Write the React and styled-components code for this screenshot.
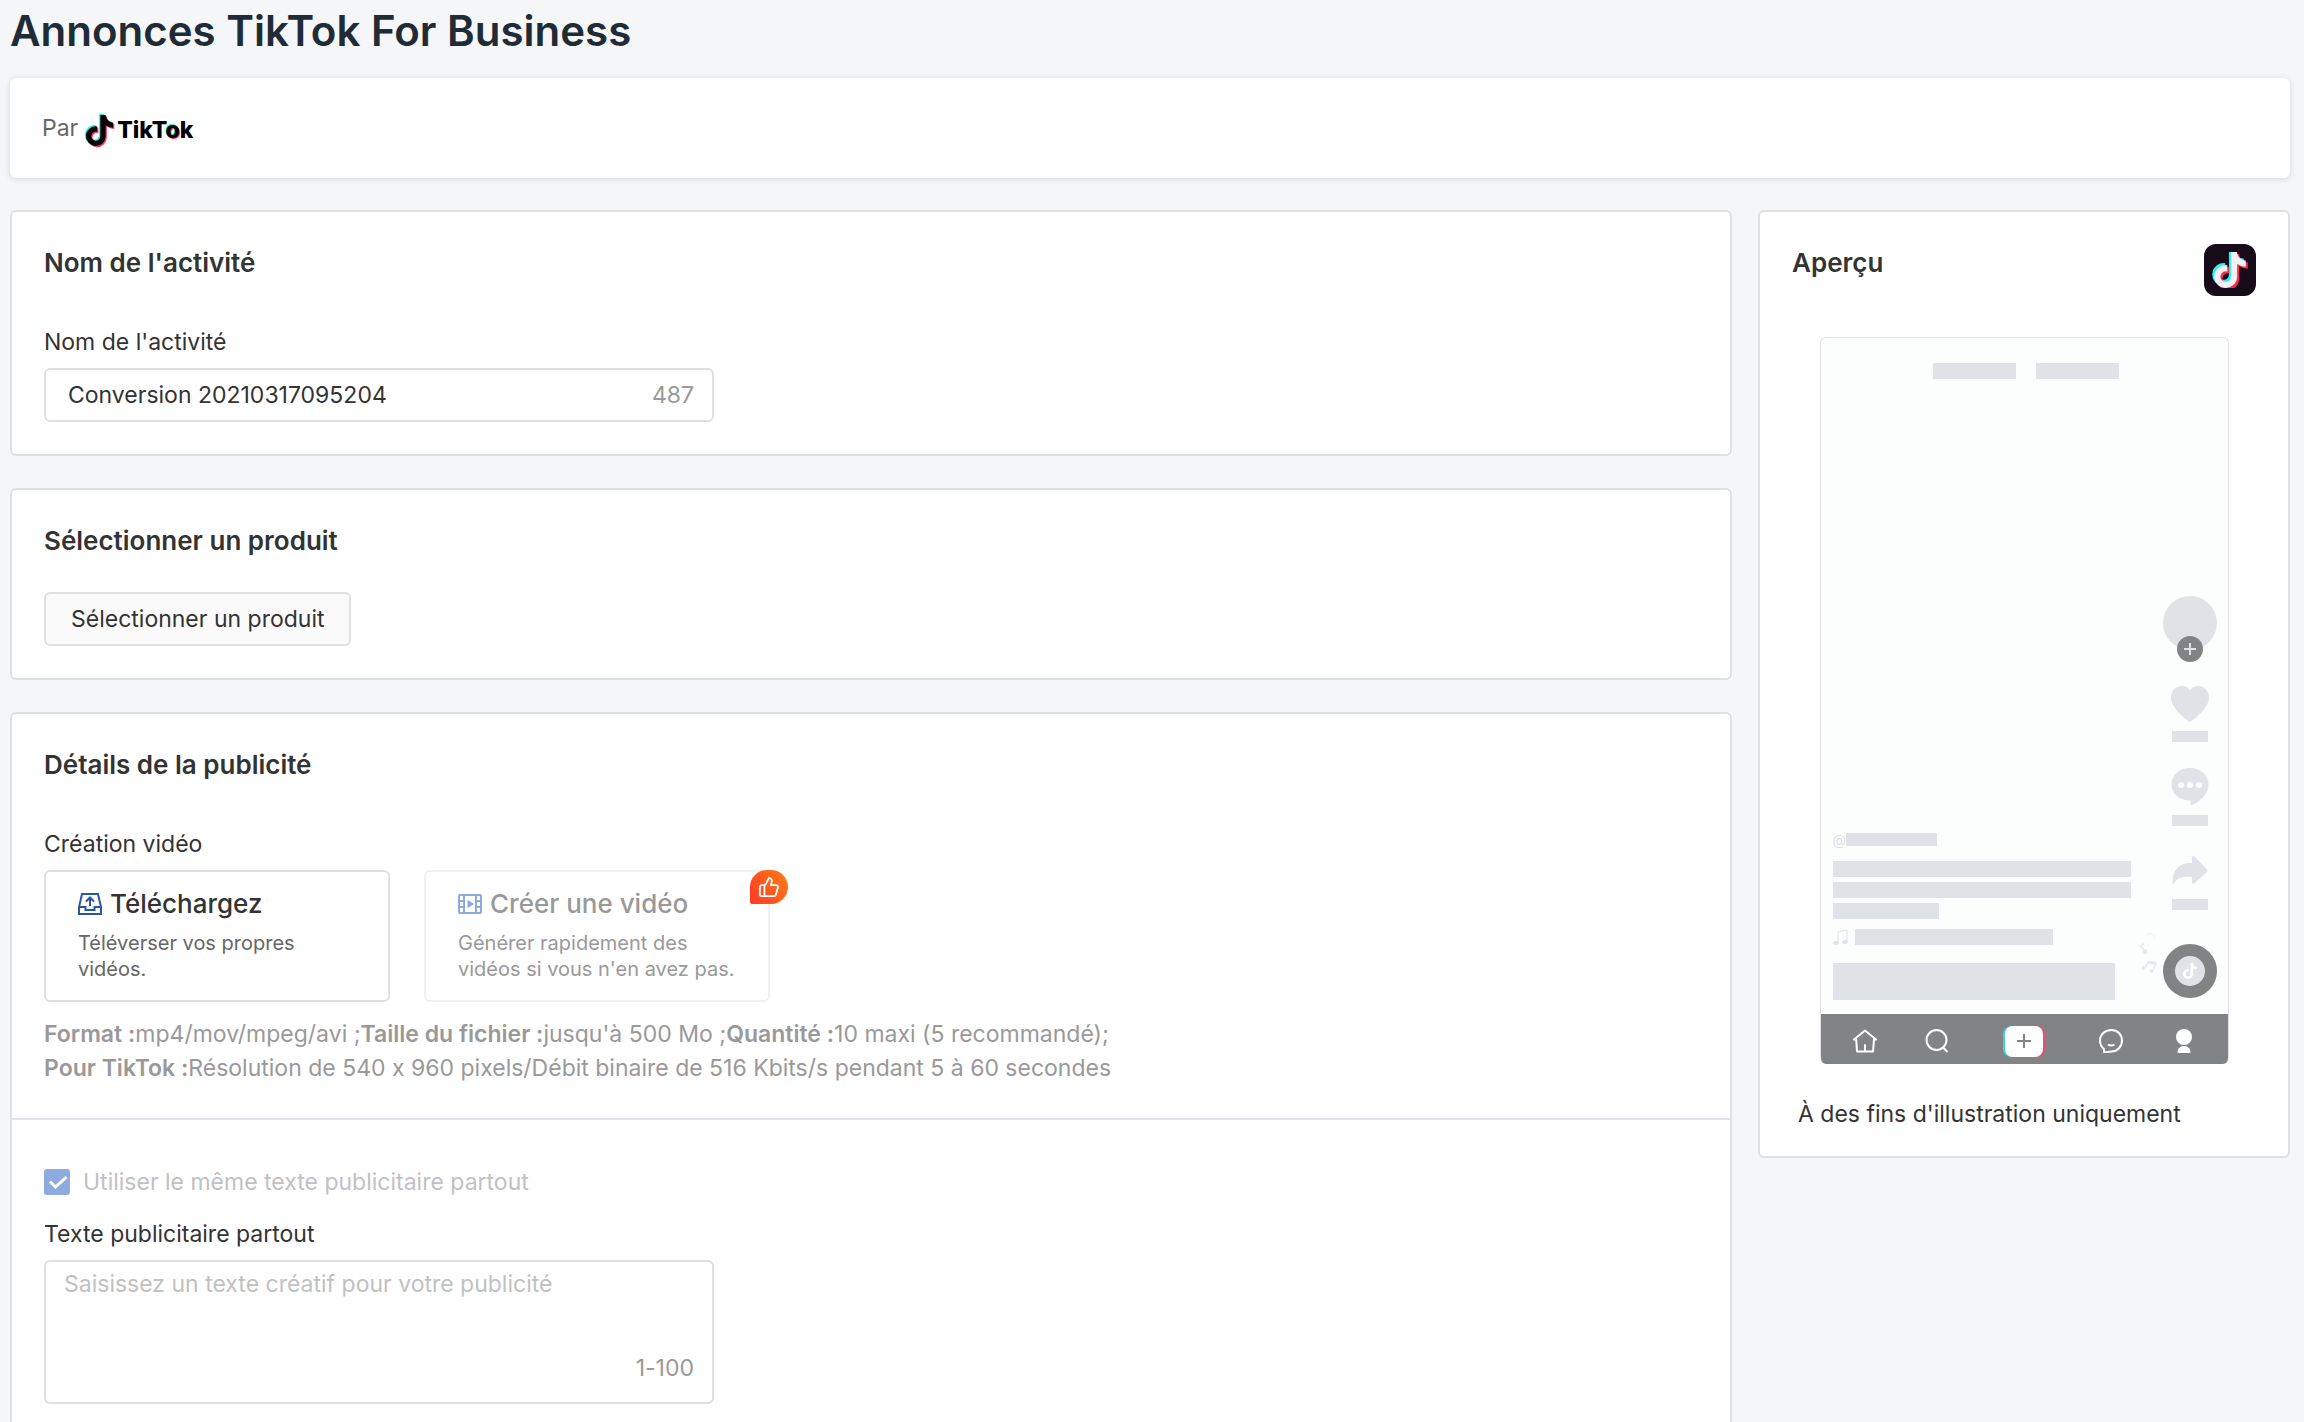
import styled, { createGlobalStyle } from "styled-components";
import { useState } from "react";
import { ThumbsUp } from "lucide-react";
import { FaTiktok } from "react-icons/fa6";

const GlobalStyle = createGlobalStyle`
  * {
    box-sizing: border-box;
  }
  body {
    margin: 0;
    background: #f4f6f8;
    color: #333;
    font-family: Inter, "Liberation Sans", sans-serif;
    font-size: 23px;
    font-feature-settings: "calt" 0;
    line-height: 32px;
  }
  button, input, textarea {
    font: inherit;
    color: inherit;
  }
`;

const TikTokNote = ({ size, color, shift }) => (
  <svg width={size} height={size} viewBox={`0 0 ${size} ${size}`}>
    <FaTiktok x={-shift} y={-shift} size={size} color="#25f4ee" />
    <FaTiktok x={shift} y={shift} size={size} color="#fe2c55" />
    <FaTiktok x={0} y={0} size={size} color={color} />
  </svg>
);

const UploadIcon = () => (
  <svg width="24" height="24" viewBox="0 0 24 24" fill="none" stroke="#2a55a5" strokeWidth="2">
    <path d="M4 2h16l3 13v7H1v-7z" />
    <path d="M1 15h6.500v3h9v-3H23" />
    <path d="M12 14V6M8 9.500L12 5.500l4 4" />
  </svg>
);

const FilmIcon = () => (
  <svg width="24" height="24" viewBox="0 0 24 24" fill="none" stroke="#8faae0" strokeWidth="2">
    <rect x="1" y="3" width="22" height="18" rx="1" />
    <path d="M6 3v18M18 3v18M1 9h5M1 15h5M18 9h5M18 15h5" />
    <path d="M10.500 9.500v5l4-2.500z" fill="#8faae0" />
  </svg>
);

const HeartIcon = () => (
  <svg width="40" height="40" viewBox="0 0 40 40" fill="#dfe2e7">
    <path d="M20 38C18 37 1 25 1 13.500 1 7 5.500 2 11.500 2c3.500 0 6.500 1.500 8.500 4 2-2.500 5-4 8.500-4C34.500 2 39 7 39 13.500 39 25 22 37 20 38z" />
  </svg>
);

const CommentIcon = () => (
  <svg width="40" height="40" viewBox="0 0 40 40">
    <path
      d="M20 0C9.500 0 1.500 7 1.500 16.500S9.500 32.500 20.500 32.500v4c0 .800.700 1 1.500.500C30 33.500 38.500 26 38.500 16.500 38.500 7 30.500 0 20 0z"
      fill="#dfe2e7"
    />
    <circle cx="11" cy="17" r="3" fill="#fff" />
    <circle cx="20" cy="17" r="3" fill="#fff" />
    <circle cx="29" cy="17" r="3" fill="#fff" />
  </svg>
);

const ShareIcon = () => (
  <svg width="40" height="40" viewBox="0 0 40 40" fill="#dfe2e7">
    <path d="M22 5.500c0-1.500 1.200-2 2.200-1.200L37 17.500c.800.800.800 1.400 0 2.200L24.200 31.500c-1 .800-2.200.300-2.200-1.200V25c-8-.500-14 0-17.500 5.800-.800 1-2 .700-2-.600C2.500 18 9 10.500 22 11z" />
  </svg>
);

const MusicIcon = () => (
  <svg width="16" height="16" viewBox="0 0 16 16" fill="none" stroke="#dfe2e7" strokeWidth="1">
    <path d="M5 13V3l9-2v11" />
    <ellipse cx="3" cy="14" rx="2.500" ry="1.500" fill="#dfe2e7" />
    <ellipse cx="12" cy="13" rx="2.500" ry="1.500" fill="#dfe2e7" />
  </svg>
);

const FlyingNotes = () => (
  <svg width="20" height="46" viewBox="0 0 20 46" fill="#e6e8ed" stroke="#e6e8ed">
    <path d="M8 7l2-4 6 2-1 4" fill="none" stroke="#f1f2f5" />
    <path d="M5 20L1.500 16 5 13.500" fill="none" strokeWidth="1.500" />
    <circle cx="6" cy="21.500" r="2" />
    <path d="M6 38l3-6 8 1.500-3 6" fill="none" strokeWidth="1.500" />
    <path d="M9 31l8 1.500v2L9 33z" />
    <circle cx="4.500" cy="38" r="1.500" />
    <circle cx="12.500" cy="41" r="1.500" />
  </svg>
);

const HomeIcon = () => (
  <svg width="24" height="24" viewBox="0 0 24 24" fill="none" stroke="#fff" strokeWidth="2" strokeLinejoin="round" strokeLinecap="round">
    <path d="M1 10.500L12 1.500l11 9h-2L20 22.500H4L3.200 10.500z" />
    <path d="M12 16v6" />
  </svg>
);

const SearchIcon = () => (
  <svg width="24" height="24" viewBox="0 0 24 24" fill="none" stroke="#fff" strokeWidth="2">
    <circle cx="11.500" cy="11" r="10" />
    <path d="M18 18.500l4.500 4.500" />
  </svg>
);

const ChatIcon = () => (
  <svg width="24" height="24" viewBox="0 0 24 24" fill="none" stroke="#fff" strokeWidth="2" strokeLinejoin="round">
    <path d="M12.500 1C6 1 1 5.500 1 11.500c0 3.500 1.500 6.500 4 8.500v3.500l7.500-1c6 0 10.500-5 10.500-11S18.500 1 12.500 1z" />
    <path d="M9 15.500c1.500 1.200 5 1.200 6.500 0" />
  </svg>
);

const UserIcon = () => (
  <svg width="24" height="24" viewBox="0 0 24 24" fill="#fff">
    <circle cx="12" cy="8" r="8" />
    <path d="M5.500 24c0-5 3-7 6.500-7s6.500 2 6.500 7z" />
  </svg>
);

const PhonePreview = () => (
  <Phone>
    <Tabs>
      <Bar $width={83} $height={16} />
      <Bar $width={83} $height={16} />
    </Tabs>
    <Feed>
      <Captions>
        <AccountRow>
          @
          <Bar $width={91} $height={13} />
        </AccountRow>
        <Lines>
          <Bar $width={298} $height={16} />
          <Bar $width={298} $height={16} />
          <Bar $width={106} $height={16} />
        </Lines>
        <MusicRow>
          <MusicIcon />
          <Bar $width={198} $height={16} />
        </MusicRow>
        <Bar $width={282} $height={37} />
      </Captions>
      <Rail>
        <Avatar>
          <Follow>
            <svg width="12" height="12" viewBox="0 0 12 12" stroke="#dfe2e7" strokeWidth="2">
              <path d="M6 0v12M0 6h12" />
            </svg>
          </Follow>
        </Avatar>
        <RailItem>
          <HeartIcon />
          <Bar $width={36} $height={11} />
        </RailItem>
        <RailItem>
          <CommentIcon />
          <Bar $width={36} $height={11} />
        </RailItem>
        <RailItem>
          <ShareIcon />
          <Bar $width={36} $height={11} />
        </RailItem>
        <Disc>
          <Notes>
            <FlyingNotes />
          </Notes>
          <FaTiktok size={16} />
        </Disc>
      </Rail>
    </Feed>
    <PhoneNav>
      <HomeIcon />
      <SearchIcon />
      <AddTile>
        <svg width="14" height="14" viewBox="0 0 14 14" stroke="#828385" strokeWidth="2">
          <path d="M7 0v14M0 7h14" />
        </svg>
      </AddTile>
      <ChatIcon />
      <UserIcon />
    </PhoneNav>
  </Phone>
);

const App = () => {
  const [name, setName] = useState("Conversion 20210317095204");
  const [adText, setAdText] = useState("");

  return (
    <Page>
      <GlobalStyle />
      <Title>Annonces TikTok For Business</Title>
      <Partner>
        Par
        <Brand>
          <TikTokNote size={31} color="#000" shift={1.2} />
          <Wordmark>
            TikT<SplitLetter>o</SplitLetter>k
          </Wordmark>
        </Brand>
      </Partner>

      <Columns>
        <Main>
          <Card>
            <Section>
              <Heading $space={44}>Nom de l'activité</Heading>
              <Label htmlFor="name">Nom de l'activité</Label>
              <Field>
                <TextInput id="name" value={name} onChange={(e) => setName(e.target.value)} />
                <Counter>487</Counter>
              </Field>
            </Section>
          </Card>

          <Card>
            <Section>
              <Heading $space={32}>Sélectionner un produit</Heading>
              <ProductButton type="button">Sélectionner un produit</ProductButton>
            </Section>
          </Card>

          <Card>
            <Section>
              <Heading $space={44}>Détails de la publicité</Heading>
              <Label as="div">Création vidéo</Label>
              <Options>
                <Option type="button">
                  <OptionTitle>
                    <UploadIcon />
                    Téléchargez
                  </OptionTitle>
                  Téléverser vos propres vidéos.
                </Option>
                <Option type="button" disabled>
                  <OptionTitle $disabled>
                    <FilmIcon />
                    Créer une vidéo
                  </OptionTitle>
                  Générer rapidement des vidéos si vous n'en avez pas.
                  <Badge>
                    <ThumbsUp size={22} strokeWidth={2} />
                  </Badge>
                </Option>
              </Options>
              <Specs>
                <div>
                  <b>Format :</b>mp4/mov/mpeg/avi ;<b>Taille du fichier :</b>jusqu'à 500 Mo ;
                  <b>Quantité :</b>10 maxi (5 recommandé);
                </div>
                <div>
                  <b>Pour TikTok :</b>Résolution de 540 x 960 pixels/Débit binaire de 516 Kbits/s
                  pendant 5 à 60 secondes
                </div>
              </Specs>
            </Section>
            <TextSection>
              <CheckLabel>
                <CheckMark>
                  <CheckInput type="checkbox" checked disabled readOnly />
                  <svg width="26" height="26" viewBox="0 0 26 26" fill="none" stroke="#fff" strokeWidth="3">
                    <path d="M6 12.500l5.500 5.500L22.500 8" />
                  </svg>
                </CheckMark>
                Utiliser le même texte publicitaire partout
              </CheckLabel>
              <Label htmlFor="adText">Texte publicitaire partout</Label>
              <AreaField>
                <TextArea
                  id="adText"
                  placeholder="Saisissez un texte créatif pour votre publicité"
                  value={adText}
                  onChange={(e) => setAdText(e.target.value)}
                />
                <Counter>1-100</Counter>
              </AreaField>
            </TextSection>
          </Card>
        </Main>

        <PreviewCard>
          <PreviewHeader>
            <Heading $space={0}>Aperçu</Heading>
            <AppIcon>
              <TikTokNote size={36} color="#f5f0f3" shift={2} />
            </AppIcon>
          </PreviewHeader>
          <PhonePreview />
          <Legend>À des fins d'illustration uniquement</Legend>
        </PreviewCard>
      </Columns>
    </Page>
  );
};

export default App;

const Page = styled.div`
  height: 100vh;
  overflow: hidden;
  padding: 0 14px 0 10px;
`;

const Title = styled.h1`
  margin: 0 0 16px;
  font-size: 42px;
  font-weight: 600;
  line-height: 62px;
  color: #212b36;
`;

const Partner = styled.header`
  display: flex;
  align-items: center;
  gap: 6px;
  height: 100px;
  margin-bottom: 32px;
  padding: 0 32px;
  border-radius: 6px;
  background: #fff;
  box-shadow: 0 1px 6px rgba(33, 43, 54, 0.15);
  color: #666;
`;

const Brand = styled.div`
  display: flex;
  align-items: center;
  gap: 2px;
  padding-top: 4px;
  color: #000;

  svg {
    overflow: visible;
  }
`;

const Wordmark = styled.span`
  font-size: 23px;
  font-weight: 800;
`;

const SplitLetter = styled.span`
  text-shadow: -1px -1px 0 #25f4ee, 1px 1px 0 #fe2c55;
`;

const Columns = styled.div`
  display: grid;
  grid-template-columns: minmax(0, 1fr) 532px;
  align-items: start;
  gap: 26px;
`;

const Main = styled.main`
  display: flex;
  flex-direction: column;
  gap: 32px;
`;

const Card = styled.section`
  border: 2px solid #dfe1e3;
  border-radius: 6px;
  background: #fff;
`;

const PreviewCard = styled(Card)`
  padding: 32px 32px 26px;
`;

const Section = styled.div`
  padding: 32px;
`;

const TextSection = styled(Section)`
  padding-top: 46px;
  border-top: 2px solid #dfe3e8;
`;

const Heading = styled.h2`
  margin: 0 0 ${(props) => props.$space}px;
  font-size: 26px;
  font-weight: 600;
  line-height: 38px;
`;

const Label = styled.label`
  display: block;
  margin-bottom: 10px;
`;

const Field = styled.div`
  display: flex;
  align-items: center;
  width: 100%;
  max-width: 670px;
  height: 54px;
  padding: 0 18px 0 22px;
  border: 2px solid #e0e0e0;
  border-radius: 6px;
  background: #fff;
`;

const AreaField = styled(Field)`
  flex-direction: column;
  align-items: flex-end;
  height: 144px;
  padding: 6px 18px 18px;
`;

const TextInput = styled.input`
  flex: 1;
  min-width: 0;
  padding: 0;
  border: none;
  outline: none;
  background: none;
`;

const TextArea = styled.textarea`
  flex: 1;
  width: 100%;
  padding: 0;
  border: none;
  outline: none;
  resize: none;
  background: none;

  &::placeholder {
    color: #c1c1c1;
  }
`;

const Counter = styled.span`
  color: #999;
`;

const ProductButton = styled.button`
  display: block;
  height: 54px;
  padding: 0 25px;
  border: 2px solid #e0e0e0;
  border-radius: 6px;
  background: #fafafa;
  cursor: pointer;
`;

const Options = styled.div`
  display: flex;
  gap: 34px;
`;

const Option = styled.button`
  position: relative;
  display: flex;
  flex-direction: column;
  width: 346px;
  height: 132px;
  padding: 13px 32px;
  border: 2px solid ${(props) => (props.disabled ? "#f0f0f0" : "#e0e0e0")};
  border-radius: 6px;
  background: #fff;
  color: ${(props) => (props.disabled ? "#999" : "#666")};
  font-size: 20px;
  line-height: 26px;
  text-align: left;
`;

const OptionTitle = styled.span`
  display: flex;
  align-items: center;
  gap: 8px;
  margin-bottom: 7px;
  color: ${(props) => (props.$disabled ? "#999" : "#333")};
  font-size: 26px;
  font-weight: 500;
  line-height: 38px;
`;

const Badge = styled.span`
  position: absolute;
  top: -2px;
  right: -20px;
  display: flex;
  align-items: center;
  justify-content: center;
  width: 38px;
  height: 34px;
  border-radius: 17px 17px 17px 2px;
  background: linear-gradient(60deg, #ff3a24, #ff7e17);
  color: #fff;
`;

const Specs = styled.div`
  margin-top: 15px;
  margin-bottom: 1px;
  color: #999;
  line-height: 34px;

  b {
    font-weight: 600;
  }
`;

const CheckLabel = styled.label`
  display: flex;
  align-items: center;
  gap: 13px;
  margin-bottom: 20px;
  color: #c1c1c1;
`;

const CheckMark = styled.span`
  display: grid;

  > * {
    grid-area: 1 / 1;
  }
`;

const CheckInput = styled.input`
  appearance: none;
  width: 26px;
  height: 26px;
  margin: 0;
  border-radius: 3px;
  background: #8faae0;
`;

const PreviewHeader = styled.div`
  display: flex;
  justify-content: space-between;
  align-items: flex-start;
  margin-bottom: 41px;
`;

const AppIcon = styled.div`
  display: flex;
  align-items: center;
  justify-content: center;
  width: 52px;
  height: 52px;
  border-radius: 12px;
  background: #170b1a;
`;

const Legend = styled.div`
  margin-top: 34px;
  padding-left: 6px;
`;

const Phone = styled.div`
  display: flex;
  flex-direction: column;
  width: 409px;
  height: 727px;
  margin: 0 auto;
  border: 1px solid #e1e3e8;
  border-bottom: none;
  border-radius: 6px;
  overflow: hidden;
  background: #fcfefd;
`;

const Bar = styled.div`
  width: ${(props) => props.$width}px;
  height: ${(props) => props.$height}px;
  background: #dfe2e7;
`;

const Tabs = styled.div`
  display: flex;
  justify-content: center;
  gap: 20px;
  padding: 25px 0 0 4px;
`;

const Feed = styled.div`
  flex: 1;
  display: flex;
  justify-content: space-between;
  align-items: flex-end;
  padding: 0 11px 14px 12px;
`;

const Captions = styled.div`
  display: flex;
  flex-direction: column;
`;

const AccountRow = styled.div`
  display: flex;
  align-items: center;
  color: #dfe2e7;
  font-size: 14px;
  line-height: 13px;
`;

const Lines = styled.div`
  display: grid;
  gap: 5px;
  margin: 15px 0 10px;
`;

const MusicRow = styled.div`
  display: flex;
  align-items: center;
  gap: 6px;
  margin-bottom: 18px;
`;

const Rail = styled.div`
  display: flex;
  flex-direction: column;
  align-items: center;
  gap: 26px;
  padding-bottom: 2px;
`;

const RailItem = styled.div`
  display: flex;
  flex-direction: column;
  align-items: center;
  gap: 7px;
`;

const Avatar = styled.div`
  position: relative;
  width: 54px;
  height: 54px;
  margin-bottom: 8px;
  border-radius: 50%;
  background: #dfe2e7;
`;

const Follow = styled.span`
  position: absolute;
  left: 14px;
  bottom: -12px;
  display: flex;
  align-items: center;
  justify-content: center;
  width: 26px;
  height: 26px;
  border-radius: 50%;
  background: #828385;
`;

const Disc = styled.div`
  position: relative;
  display: flex;
  align-items: center;
  justify-content: center;
  width: 54px;
  height: 54px;
  margin-top: 8px;
  border: 12px solid #828385;
  border-radius: 50%;
  background: #dfe2e7;
  color: #fff;
`;

const Notes = styled.span`
  position: absolute;
  right: 46px;
  bottom: 2px;
`;

const PhoneNav = styled.div`
  display: flex;
  align-items: center;
  justify-content: space-between;
  height: 50px;
  padding: 4px 32px 0;
  background: #828385;
`;

const AddTile = styled.span`
  display: flex;
  align-items: center;
  justify-content: center;
  width: 38px;
  height: 31px;
  margin: 0 7px;
  border-radius: 8px;
  background: #fff;
  box-shadow: -2px 0 0 #3fcfe0, 2px 0 0 #ee4b7c;
`;
